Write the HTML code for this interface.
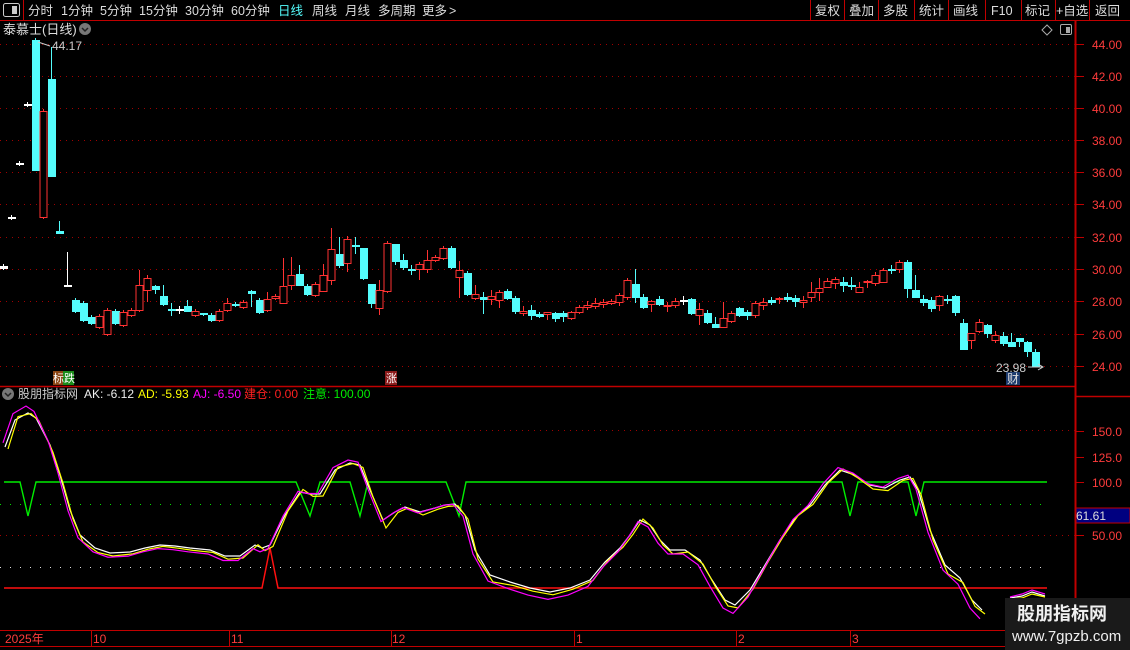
<!DOCTYPE html>
<html><head><meta charset="utf-8">
<style>
html,body{margin:0;padding:0;background:#000;width:1130px;height:650px;overflow:hidden;font-family:"Liberation Sans","Noto Sans CJK SC",sans-serif;}
svg{display:block}
text{font-family:"Liberation Sans","Noto Sans CJK SC",sans-serif;}
</style></head><body>
<svg id="s" width="1130" height="650" xmlns="http://www.w3.org/2000/svg">
<rect width="1130" height="650" fill="#000"/>
<line x1="0" y1="20.5" x2="1130" y2="20.5" stroke="#c00000"/>
<rect x="3.5" y="3.5" width="16" height="13" fill="none" stroke="#ccc" rx="2"/>
<rect x="12" y="6" width="5" height="8" fill="#ccc"/>
<line x1="23.5" y1="0" x2="23.5" y2="20" stroke="#c00000"/>
<g font-size="12.5" fill="#ddd">
<text x="28" y="15">分时</text><text x="61" y="15">1分钟</text><text x="100" y="15">5分钟</text><text x="139" y="15">15分钟</text><text x="185" y="15">30分钟</text><text x="231" y="15">60分钟</text>
<text x="278" y="15" fill="#54fcfc">日线</text><text x="312" y="15">周线</text><text x="345" y="15">月线</text><text x="378" y="15">多周期</text><text x="422" y="15">更多</text><text x="449" y="15">&gt;</text>
</g>
<g stroke="#c00000"><line x1="810.5" y1="0" x2="810.5" y2="20"/><line x1="844.5" y1="0" x2="844.5" y2="20"/><line x1="878.5" y1="0" x2="878.5" y2="20"/><line x1="914.5" y1="0" x2="914.5" y2="20"/><line x1="948.5" y1="0" x2="948.5" y2="20"/><line x1="985.5" y1="0" x2="985.5" y2="20"/><line x1="1021.5" y1="0" x2="1021.5" y2="20"/><line x1="1055.5" y1="0" x2="1055.5" y2="20"/><line x1="1089.5" y1="0" x2="1089.5" y2="20"/></g>
<g font-size="12.5" fill="#ddd">
<text x="815" y="15">复权</text><text x="849" y="15">叠加</text><text x="883" y="15">多股</text><text x="919" y="15">统计</text><text x="953" y="15">画线</text><text x="991" y="15">F10</text><text x="1025" y="15">标记</text><text x="1056" y="15">+自选</text><text x="1095" y="15">返回</text>
</g>
<text x="3" y="34" font-size="13" fill="#ddd">泰慕士(日线)</text>
<circle cx="85" cy="29" r="6" fill="#777"/><path d="M82 28l3 3 3-3" stroke="#222" fill="none" stroke-width="1.5"/>
<path d="M1042 30l5-5 5 5-5 5z" fill="none" stroke="#aaa"/>
<rect x="1060.5" y="24.5" width="11" height="10" fill="none" stroke="#aaa" rx="1.5"/><rect x="1066" y="27" width="4" height="6" fill="#aaa"/>
<line x1="1075.5" y1="20" x2="1075.5" y2="650" stroke="#c00000" stroke-width="2"/>
<line x1="0" y1="386.5" x2="1075" y2="386.5" stroke="#c00000" stroke-width="1.5"/>
<line x1="1075" y1="396.5" x2="1130" y2="396.5" stroke="#c00000" stroke-width="1.5"/>
<line x1="0" y1="630.5" x2="1075" y2="630.5" stroke="#c00000"/>
<line x1="0" y1="646.5" x2="1075" y2="646.5" stroke="#c00000"/>
<g id="grid"></g>
<g font-size="12" fill="#ff3c3c" id="ax"></g>
<g id="cd"></g>
<text x="52" y="50" font-size="12" fill="#ccc">44.17</text>
<line x1="38" y1="42" x2="50" y2="46" stroke="#ccc"/>
<text x="996" y="372" font-size="12" fill="#ccc">23.98</text>
<line x1="1028" y1="367" x2="1043" y2="367" stroke="#ccc"/><path d="M1038 364l5 3-5 3" fill="none" stroke="#ccc"/>
<rect x="1006" y="372" width="14" height="13" fill="#1e3c6e"/><text x="1007" y="383" font-size="12" fill="#ddd">财</text>
<rect x="53" y="371" width="11" height="14" fill="#8b4513"/><rect x="63" y="371" width="11" height="14" fill="#1a8c1a"/>
<text x="53" y="382" font-size="11" fill="#fff">标跌</text>
<rect x="385" y="371" width="12" height="14" fill="#8b1a1a"/><text x="386" y="382" font-size="11" fill="#fff">涨</text>
<circle cx="8" cy="394" r="6" fill="#777"/><path d="M5 393l3 3 3-3" stroke="#222" fill="none" stroke-width="1.5"/>
<g font-size="12">
<text x="18" y="398" fill="#ccc">股朋指标网</text>
<text x="84" y="398" fill="#eee">AK: -6.12</text>
<text x="138" y="398" fill="#ffff00">AD: -5.93</text>
<text x="193" y="398" fill="#ff00ff">AJ: -6.50</text>
<text x="244" y="398" fill="#ff2020">建仓: 0.00</text>
<text x="303" y="398" fill="#00ee00">注意: 100.00</text>
</g>
<g id="ind"></g>
<rect x="1076" y="508" width="54" height="15" fill="#000080" stroke="#c00000"/>
<text x="1076" y="520" font-size="12" fill="#ddd">61.61</text>
<g font-size="12" fill="#ff3c3c">
<text x="5" y="643">2025年</text><text x="93" y="643">10</text><text x="231" y="643">11</text><text x="392" y="643">12</text><text x="576" y="643">1</text><text x="738" y="643">2</text><text x="852" y="643">3</text>
</g>
<g stroke="#c00000"><line x1="91.5" y1="630" x2="91.5" y2="646"/><line x1="229.5" y1="630" x2="229.5" y2="646"/><line x1="391.5" y1="630" x2="391.5" y2="646"/><line x1="574.5" y1="630" x2="574.5" y2="646"/><line x1="736.5" y1="630" x2="736.5" y2="646"/><line x1="850.5" y1="630" x2="850.5" y2="646"/></g>
<rect x="1005" y="598" width="125" height="52" fill="#1a1a1a"/>
<text x="1017" y="620" font-size="18" font-weight="bold" fill="#f0f0f0">股朋指标网</text>
<text x="1012" y="641" font-size="15" fill="#f0f0f0">www.7gpzb.com</text>
</svg>
<script>
var NS="http://www.w3.org/2000/svg";
function el(p,t,a){var e=document.createElementNS(NS,t);for(var k in a)e.setAttribute(k,a[k]);p.appendChild(e);return e;}
var g=document.getElementById('grid');
var lv=[[44,"44.00"],[76,"42.00"],[108,"40.00"],[140,"38.00"],[172,"36.00"],[204,"34.00"],[237,"32.00"],[269,"30.00"],[301,"28.00"],[334,"26.00"],[366,"24.00"]];
var ax=document.getElementById('ax');
lv.forEach(function(l){el(g,'line',{x1:0,y1:l[0]+.5,x2:1075,y2:l[0]+.5,stroke:'#a00000','stroke-dasharray':'1 5'});el(g,'line',{x1:1076,y1:l[0]+.5,x2:1084,y2:l[0]+.5,stroke:'#c00000'});var t=el(ax,'text',{x:1092,y:l[0]+5});t.textContent=l[1];});
[[431,"150.0"],[457,"125.0"],[482,"100.0"],[535,"50.00"]].forEach(function(l){el(g,'line',{x1:1076,y1:l[0]+.5,x2:1084,y2:l[0]+.5,stroke:'#c00000'});var t=el(ax,'text',{x:1092,y:l[0]+5});t.textContent=l[1];});
el(g,'line',{x1:0,y1:430.5,x2:1075,y2:430.5,stroke:'#a00000','stroke-dasharray':'1 5'});
el(g,'line',{x1:0,y1:535.5,x2:1075,y2:535.5,stroke:'#a00000','stroke-dasharray':'1 5'});
el(g,'line',{x1:0,y1:504.5,x2:1050,y2:504.5,stroke:'#00dd00','stroke-dasharray':'1 9'});
el(g,'line',{x1:0,y1:567.5,x2:1050,y2:567.5,stroke:'#ddd','stroke-dasharray':'1 9'});
var C=[[266,268,'w'],[217,218,'w'],[163,164,'w'],[104,105,'w'],[40,170,'c',38,170],[111,217,'r'],[79,176,'c',47,176],[231,233,'c',221,233],[285,286,'w',252,286],
[300,311,'c'],[303,320,'c'],[317,323,'c'],[316,327,'r'],[310,334,'r'],[311,323,'c'],[312,325,'r'],[310,315,'r'],[285,310,'r',270,312],[278,290,'r',275,302],[286,289,'c',285,294],[296,304,'c',285,306],[309,310,'c',303,316],[309,310,'w',306,314],[306,311,'c',300,312],[311,315,'r'],
[313,314,'c',313,316],[315,320,'c'],[311,320,'r'],[303,310,'r',298,312],[304,305,'c'],[302,307,'r'],[291,293,'c',290,307],[300,312,'c'],[299,310,'r',292,312],[296,298,'r'],[286,303,'r',258,298],[275,285,'r',257,290],[274,285,'c',265,285],[286,294,'c'],[284,295,'r'],[275,291,'r',264,292],[249,280,'r',228,285],[254,265,'c',237,268],[239,263,'r',236,272],[245,246,'c',237,254],[248,278,'c',248,280],[284,303,'c',284,308],[290,308,'r',280,315],[243,291,'r'],[244,261,'c',244,265],[260,267,'c',254,270],[269,270,'c',265,275],[264,269,'r',262,280],[260,269,'r',250,273],[257,260,'r'],[248,258,'r'],[248,267,'c'],[270,277,'r',261,298],[273,294,'c'],[294,298,'r',285,300],[297,299,'c',292,314],[296,299,'r',290,305],
[292,300,'r',290,308],[291,298,'c'],[298,311,'c',296,314],[311,313,'r',306,316],[310,315,'c',305,320],[314,316,'c',312,318],[312,314,'r',312,320],[313,318,'c',312,322],[313,316,'c',311,322],[312,318,'r',311,320],[307,312,'r'],[305,307,'r',301,310],[303,306,'r',298,309],[302,304,'r',299,308],[301,303,'r',299,305],[295,302,'r',293,306],[280,297,'r',278,300],[284,297,'c',269,303],[297,307,'c',294,309],[301,304,'r',300,312],[299,304,'c',296,306],[305,306,'r',302,312],[301,305,'r',298,308],[300,301,'w',296,305],
[299,313,'c',298,315],[309,315,'r',303,325],[313,322,'c',310,324],[324,327,'c',317,327],[318,327,'r',302,327],[313,321,'r'],[308,315,'c',307,317],[312,315,'c',310,320],[303,315,'r',301,318],[302,305,'r',298,310],[300,302,'c',297,305],[298,299,'r',297,304],[297,299,'c',293,302],[298,301,'c',295,307],[300,302,'r',296,308],[292,297,'r',282,302],[288,292,'r',278,301],[281,287,'r',278,288],[279,283,'r',277,289],[282,285,'c',277,292],[285,286,'c',277,290],[287,292,'r',282,293],[281,282,'r',280,288],
[275,283,'r',272,286],[270,282,'r',268,283],[269,270,'c',265,274],[262,269,'r',260,273],[262,288,'c',260,298],[290,297,'c',275,298],[299,302,'c',295,306],[300,308,'c',297,312],[296,305,'r',295,311],[299,300,'c',295,304],[296,312,'c',295,316],[323,349,'c',319,350],[333,340,'r',333,349],[322,331,'r',319,333],[325,333,'c',324,338],[335,340,'r',331,343],[336,343,'c',332,346],[342,346,'c',333,347],[338,341,'c',338,347],[342,351,'c',341,357],[352,366,'c',349,366]];
var cd=document.getElementById('cd');
C.forEach(function(c,i){var x=3+8*i;var col=c[2]=='c'?'#54fcfc':(c[2]=='r'?'#ff3232':'#ffffff');
 var wt=c[3]!==undefined?c[3]:c[0]-2,wb=c[4]!==undefined?c[4]:c[1]+2;
 el(cd,'line',{x1:x+.5,y1:wt,x2:x+.5,y2:wb,stroke:col});
 var h=Math.max(1,c[1]-c[0]);
 if(c[2]=='r')el(cd,'rect',{x:x-3,y:c[0]+.5,width:7,height:h,fill:'#000',stroke:col});
 else el(cd,'rect',{x:x-3,y:c[0],width:8,height:h+1,fill:col});
});
var ind=document.getElementById('ind');
function pl(pts,col,w){el(ind,'polyline',{points:pts.map(function(p){return p.join(',')}).join(' '),fill:'none',stroke:col,'stroke-width':w||1.2});}
pl([[4,588],[262,588],[270,548],[278,588],[1047,588]],'#ff1010',1.5);
pl([[4,482],[20,482],[28,516],[36,482],[296,482],[310,516],[320,482],[350,482],[360,516],[368,482],[446,482],[453,500],[459,516],[466,482],[842,482],[850,516],[858,482],[908,482],[916,516],[924,482],[1047,482]],'#00ee00',1.4);
var W=[[5,447],[15,420],[28,413],[36,418],[50,445],[60,475],[70,510],[80,535],[95,548],[110,553],[130,552],[145,548],[160,545],[175,546],[190,548],[210,550],[225,556],[240,556],[255,545],[262,548],[270,545],[285,515],[300,492],[310,494],[320,494],[335,470],[350,463],[360,465],[370,490],[383,520],[395,512],[405,507],[420,512],[435,508],[445,505],[455,504],[465,515],[475,550],[490,575],[510,582],[530,588],[550,592],[570,588],[590,580],[605,562],[620,548],[630,535],[640,520],[650,525],[660,540],[670,550],[685,550],[700,560],[712,580],[725,600],[735,605],[750,590],[765,565],[780,540],[795,518],[810,505],[825,485],[840,470],[855,475],[870,485],[885,488],[900,480],[910,477],[918,490],[930,530],[945,565],[960,578],[972,600],[982,610]];
pl(W,'#ffffff');
pl(W.map(function(p,i){var q=W[Math.max(0,i-1)];return [p[0]+3,p[1]+(i>0?(p[1]-q[1])*0.2:0)+2]}),'#ffff00');
pl(W.map(function(p){return [p[0]-2,Math.min(628,500+(p[1]-500)*1.08)]}),'#ff00ff');
pl([[1010,598],[1022,596],[1032,592],[1045,596]],'#ffffff');pl([[1010,599],[1022,598],[1032,594],[1045,597]],'#ffff00');pl([[1010,597],[1022,594],[1032,590],[1045,594]],'#ff00ff');
</script>
</body></html>
